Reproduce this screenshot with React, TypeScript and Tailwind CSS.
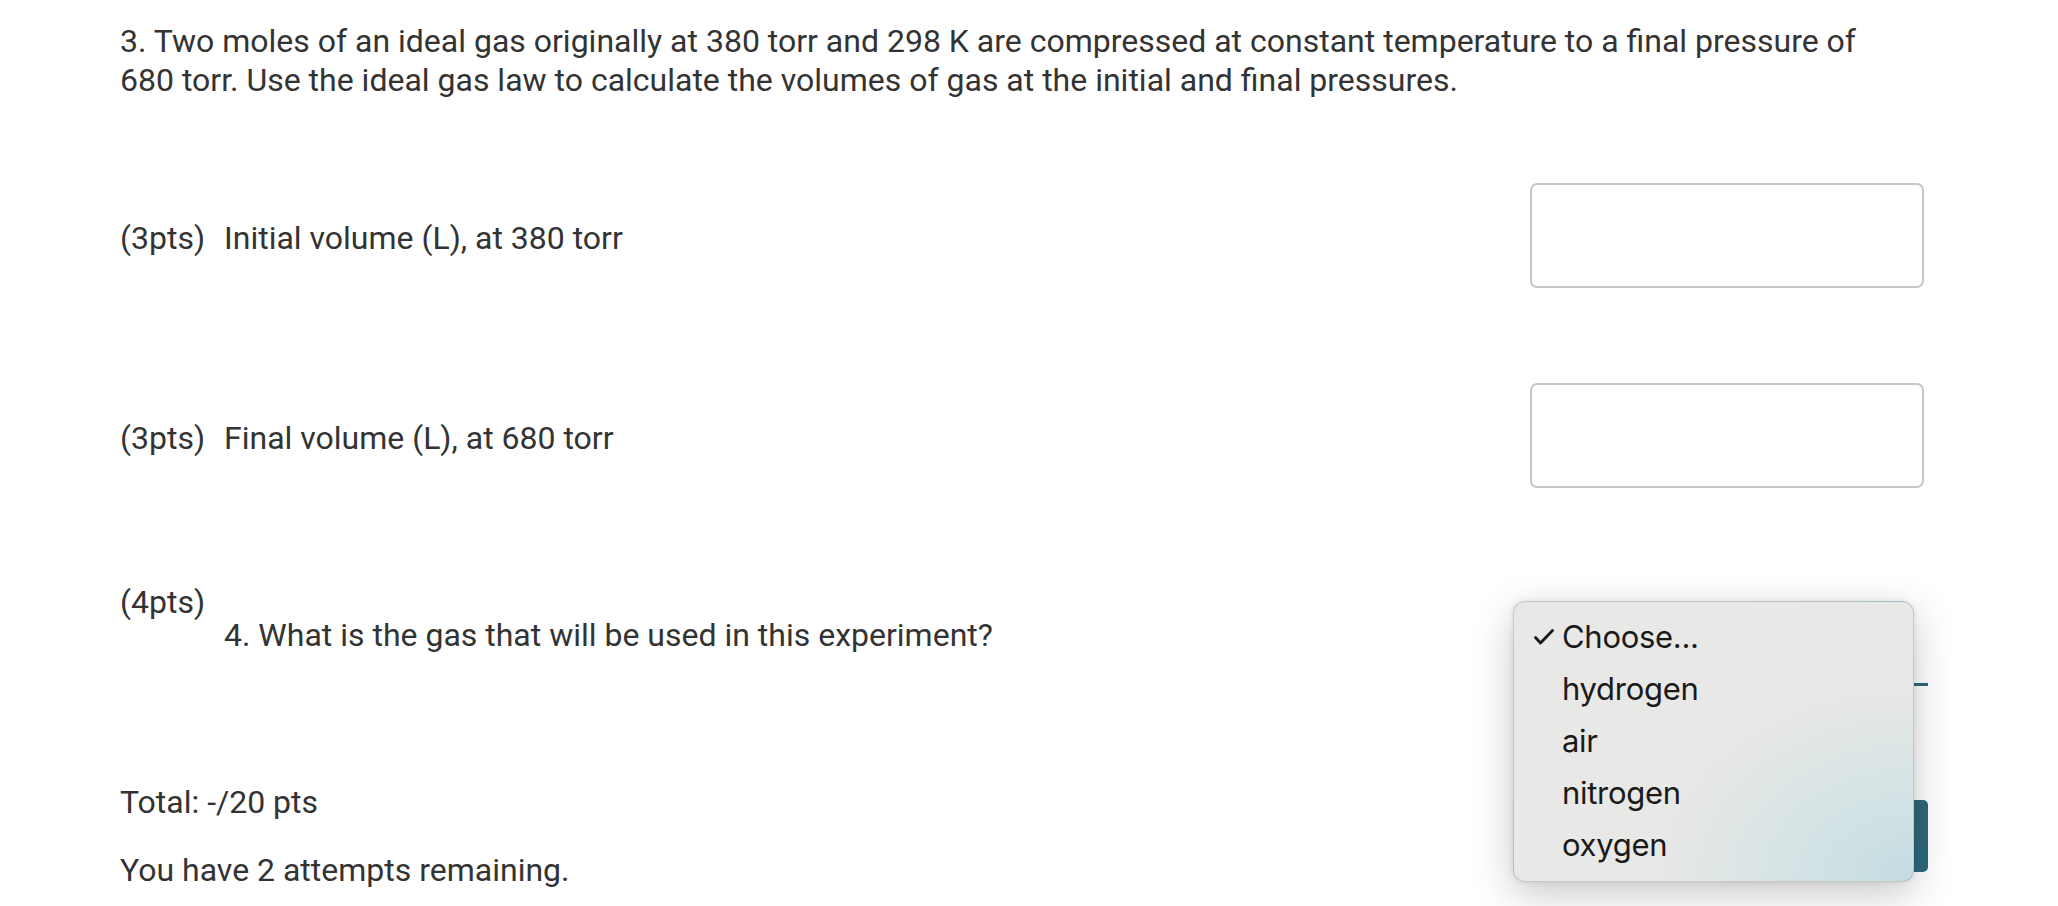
import React from "react";

const options = ["Choose...", "hydrogen", "air", "nitrogen", "oxygen"];

function Check() {
  return (
    <svg width="20" height="16" viewBox="0 0 20 16" className="block">
      <path d="M1.5 8.5 L6.5 14 L18.5 1.5" fill="none" stroke="#1a1a1a" strokeWidth="2.8" strokeLinecap="round" strokeLinejoin="round" />
    </svg>
  );
}

export default function App() {
  return (
    <div className="relative w-[2058px] h-[906px] overflow-hidden bg-white font-['Roboto',sans-serif] text-[#333333] text-[32px] leading-[38.5px]">
      <div className="pl-[120px] pt-[22px] w-[1928px]">
        <p className="pr-[40px]">
          3. Two moles of an ideal gas originally at 380 torr and 298 K are compressed at constant temperature to a final pressure of 680 torr. Use the ideal gas law to calculate the volumes of gas at the initial and final pressures.
        </p>

        <div className="flex items-start justify-between mt-[84px] h-[105px]">
          <div className="flex mt-[36px]">
            <span className="w-[104px]">(3pts)</span>
            <span>Initial volume (L), at 380 torr</span>
          </div>
          <div className="w-[394px] h-[105px] border-[2px] border-[#c6c6c6] rounded-[7px] mr-[4px] bg-white" />
        </div>

        <div className="flex items-start justify-between mt-[95px] h-[105px]">
          <div className="flex mt-[36px]">
            <span className="w-[104px]">(3pts)</span>
            <span>Final volume (L), at 680 torr</span>
          </div>
          <div className="w-[394px] h-[105px] border-[2px] border-[#c6c6c6] rounded-[7px] mr-[4px] bg-white" />
        </div>

        <div className="flex items-start justify-between mt-[95px] h-[105px]">
          <div className="flex">
            <span className="w-[104px]">(4pts)</span>
            <span className="mt-[33px]">4. What is the gas that will be used in this experiment?</span>
          </div>
          <div className="w-[398px] h-[103px] border-b-[3px] border-[#2d687c]" />
        </div>

        <div className="flex items-start justify-between mt-[95px]">
          <div className="flex flex-col">
            <span>Total: -/20 pts</span>
            <span className="mt-[29px]">You have 2 attempts remaining.</span>
          </div>
          <button className="mt-[17px] h-[72px] w-[240px] rounded-[5px] bg-[#2d687c] text-white text-[28px]">
            Submit Answers
          </button>
        </div>
      </div>

      <div className="absolute left-[1513px] top-[601px] w-[401px] h-[281px] rounded-[12px] border border-[rgba(0,0,0,0.14)] bg-[#e8e8e6] bg-[radial-gradient(ellipse_65%_70%_at_100%_100%,#c4dce2_0%,#d2e2e4_40%,#e8e8e6_100%)] shadow-[0_12px_40px_rgba(0,0,0,0.22),0_0_6px_rgba(0,0,0,0.08)] pt-[9px] font-['Inter',sans-serif] text-[#1a1a1a] text-[31px] leading-[52px] tracking-[-0.3px]">
        {options.map((o, i) => (
          <div key={o} className="flex items-center h-[52px]">
            <span className="w-[48px] flex justify-end pr-[8px]">{i === 0 ? <Check /> : null}</span>
            <span>{o}</span>
          </div>
        ))}
      </div>
    </div>
  );
}
